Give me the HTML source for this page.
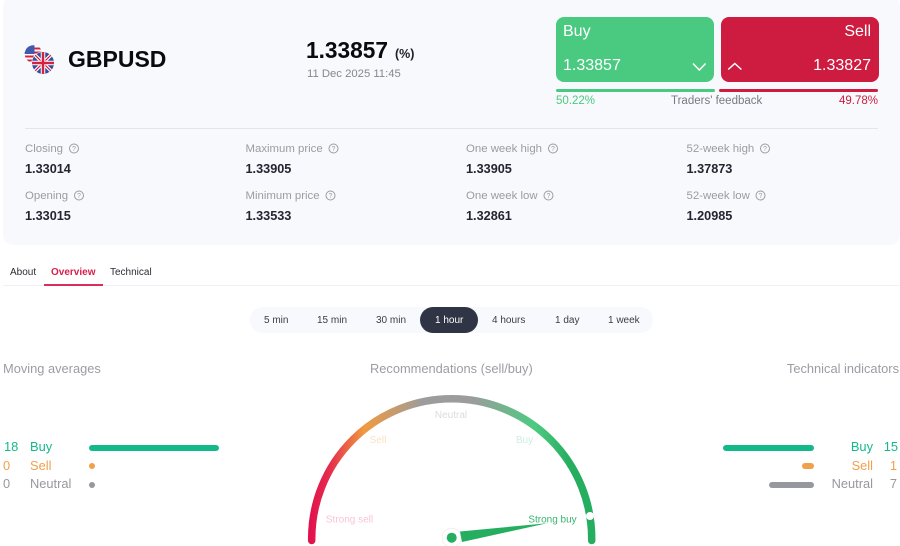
<!DOCTYPE html>
<html lang="en"><head><meta charset="utf-8"><title>GBPUSD</title>
<style>
*{box-sizing:border-box}
html,body{margin:0;padding:0;background:#fff}
body{width:900px;height:546px;overflow:hidden;position:relative;font-family:"Liberation Sans",Arial,sans-serif;color:#222}
.a{position:absolute;white-space:nowrap;line-height:1}
.lab{font-size:11.4px;color:#9a9ca2;top:0}
.val{font-size:12.7px;font-weight:700;color:#222630}
.tf{font-size:10px;color:#3a3d45}
.h{font-size:12.85px;color:#9b9da3}
.r{font-size:12.85px}
</style></head><body>
<div class="a" style="left:3px;top:-4px;width:897px;height:249px;background:#f8f9fc;border-radius:10px"></div>

<svg class="a" style="left:24px;top:45px" width="32" height="30" viewBox="24 45 32 30">
<defs><clipPath id="us"><circle cx="33.500" cy="54" r="8.800"/></clipPath><clipPath id="uk"><circle cx="43" cy="63" r="11"/></clipPath></defs>
<g clip-path="url(#us)"><rect x="24" y="45" width="20" height="18" fill="#fff"/>
<path d="M24 47.500h20v2H24zM24 51.500h20v2H24zM24 55.500h20v2H24zM24 59.500h20v2H24z" fill="#d5213f"/>
<rect x="24" y="45" width="10.500" height="9" fill="#3f5bb0"/></g>
<circle cx="43" cy="63" r="11.500" fill="#f8f9fc"/>
<g clip-path="url(#uk)"><rect x="32" y="52" width="22" height="22" fill="#2f50a0"/>
<path d="M32 52L54 74M54 52L32 74" stroke="#fff" stroke-width="3.500"/>
<path d="M32 52L54 74M54 52L32 74" stroke="#d5213f" stroke-width="1.200"/>
<path d="M43 52V74M32 63H54" stroke="#fff" stroke-width="4.500"/>
<path d="M43 52V74M32 63H54" stroke="#d5213f" stroke-width="2.500"/></g>
</svg>
<div class="a" style="left:68px;top:48px;font-size:23px;font-weight:700;color:#0b0b0f">GBPUSD</div>
<div class="a" style="left:306px;top:39px;font-size:22.700px;font-weight:700;color:#0b0b0f">1.33857</div>
<div class="a" style="left:395px;top:48px;font-size:12.500px;font-weight:700;color:#1c1f28">(%)</div>
<div class="a" style="left:307px;top:69px;font-size:11.300px;color:#85878d">11 Dec 2025 11:45</div>

<div class="a" style="left:556px;top:17px;width:158px;height:65px;background:#4aca80;border-radius:8px"></div>
<div class="a" style="left:721px;top:17px;width:158px;height:65px;background:#cd1c40;border-radius:8px"></div>
<div class="a" style="left:563px;top:24px;font-size:16px;color:#fff">Buy</div>
<div class="a" style="right:29px;top:24px;font-size:16px;color:#fff">Sell</div>
<div class="a" style="left:563px;top:58px;font-size:16px;color:#fff">1.33857</div>
<div class="a" style="right:29px;top:58px;font-size:16px;color:#fff">1.33827</div>
<svg class="a" style="left:692px;top:62px" width="15" height="11"><path d="M1 1.500L7.300 8L13.600 1.500" fill="none" stroke="#fff" stroke-width="1.500"/></svg>
<svg class="a" style="left:727px;top:61px" width="16" height="11"><path d="M1.200 8.500L7.800 2.500L14.400 8.500" fill="none" stroke="#fff" stroke-width="1.500"/></svg>
<div class="a" style="left:556px;top:89px;width:159px;height:3px;background:#4aca80;border-radius:2px"></div>
<div class="a" style="left:719px;top:89px;width:159px;height:3px;background:#cd1c40;border-radius:2px"></div>
<div class="a" style="left:556px;top:96px;font-size:11.500px;color:#4aca80">50.22%</div>
<div class="a" style="left:671px;top:96px;font-size:11.500px;color:#777a82">Traders' feedback</div>
<div class="a" style="right:22px;top:96px;font-size:11.500px;color:#cd1c40">49.78%</div>

<div class="a" style="left:25px;top:128px;width:853px;height:1px;background:#e3e5ec"></div>

<div class="a lab" style="left:25px;top:144px">Closing</div>
<div class="a lab" style="left:245.500px;top:144px">Maximum price</div>
<div class="a lab" style="left:466px;top:144px">One week high</div>
<div class="a lab" style="left:686.500px;top:144px">52-week high</div>
<div class="a val" style="left:25px;top:163px">1.33014</div>
<div class="a val" style="left:245.500px;top:163px">1.33905</div>
<div class="a val" style="left:466px;top:163px">1.33905</div>
<div class="a val" style="left:686.500px;top:163px">1.37873</div>
<div class="a lab" style="left:25px;top:191px">Opening</div>
<div class="a lab" style="left:245.500px;top:191px">Minimum price</div>
<div class="a lab" style="left:466px;top:191px">One week low</div>
<div class="a lab" style="left:686.500px;top:191px">52-week low</div>
<div class="a val" style="left:25px;top:210px">1.33015</div>
<div class="a val" style="left:245.500px;top:210px">1.33533</div>
<div class="a val" style="left:466px;top:210px">1.32861</div>
<div class="a val" style="left:686.500px;top:210px">1.20985</div>

<svg class="a" style="left:0;top:140px" width="900" height="65" fill="none" stroke="#9a9ca2" stroke-width="1">
<g><circle cx="74" cy="8.500" r="4.500"/><circle cx="333.500" cy="8.500" r="4.500"/><circle cx="553" cy="8.500" r="4.500"/><circle cx="765" cy="8.500" r="4.500"/>
<circle cx="79" cy="55.500" r="4.500"/><circle cx="330.500" cy="55.500" r="4.500"/><circle cx="548.500" cy="55.500" r="4.500"/><circle cx="760.500" cy="55.500" r="4.500"/></g>
<g font-family="Liberation Sans,sans-serif" font-size="7" fill="#9a9ca2" stroke="none" text-anchor="middle">
<text x="74" y="11">?</text><text x="333.500" y="11">?</text><text x="553" y="11">?</text><text x="765" y="11">?</text>
<text x="79" y="58">?</text><text x="330.500" y="58">?</text><text x="548.500" y="58">?</text><text x="760.500" y="58">?</text></g>
</svg>

<div class="a" style="left:10px;top:268px;font-size:10px;color:#2a2d35">About</div>
<div class="a" style="left:51px;top:268px;font-size:10px;font-weight:700;color:#d81f4c">Overview</div>
<div class="a" style="left:110px;top:268px;font-size:10px;color:#2a2d35">Technical</div>
<div class="a" style="left:3px;top:285px;width:897px;height:1px;background:#f0f1f6"></div>
<div class="a" style="left:44px;top:284px;width:59px;height:2px;background:#d8305a"></div>

<div class="a" style="left:250px;top:307px;width:403px;height:26px;background:#f8f9fc;border-radius:13px"></div>
<div class="a" style="left:420px;top:307px;width:58px;height:26px;background:#2f3544;border-radius:13px"></div>
<div class="a tf" style="left:264px;top:316px">5 min</div>
<div class="a tf" style="left:317px;top:316px">15 min</div>
<div class="a tf" style="left:376px;top:316px">30 min</div>
<div class="a tf" style="left:435px;top:316px;color:#fff">1 hour</div>
<div class="a tf" style="left:492px;top:316px">4 hours</div>
<div class="a tf" style="left:555px;top:316px">1 day</div>
<div class="a tf" style="left:608px;top:316px">1 week</div>

<div class="a h" style="left:3px;top:363px">Moving averages</div>
<div class="a h" style="left:370px;top:363px">Recommendations (sell/buy)</div>
<div class="a h" style="right:1px;top:363px">Technical indicators</div>

<div class="a r" style="left:4px;top:441px;color:#14b98a">18</div>
<div class="a r" style="left:30px;top:441px;color:#14b98a">Buy</div>
<div class="a r" style="left:3px;top:460px;color:#f0a04a">0</div>
<div class="a r" style="left:30px;top:460px;color:#f0a04a">Sell</div>
<div class="a r" style="left:3px;top:478px;color:#96989e">0</div>
<div class="a r" style="left:30px;top:478px;color:#96989e">Neutral</div>
<div class="a" style="left:89px;top:445px;width:130px;height:6px;background:#14b98a;border-radius:3px"></div>
<div class="a" style="left:89px;top:463px;width:6px;height:6px;background:#f0a04a;border-radius:3px"></div>
<div class="a" style="left:89px;top:482px;width:6px;height:6px;background:#96989e;border-radius:3px"></div>

<div class="a r" style="right:27px;top:441px;color:#14b98a">Buy</div>
<div class="a r" style="right:2px;top:441px;color:#14b98a">15</div>
<div class="a r" style="right:27px;top:460px;color:#f0a04a">Sell</div>
<div class="a r" style="right:3px;top:460px;color:#f0a04a">1</div>
<div class="a r" style="right:27px;top:478px;color:#96989e">Neutral</div>
<div class="a r" style="right:3px;top:478px;color:#96989e">7</div>
<div class="a" style="left:723px;top:445px;width:91px;height:6px;background:#14b98a;border-radius:3px"></div>
<div class="a" style="left:802px;top:463px;width:12px;height:6px;background:#f0a04a;border-radius:3px"></div>
<div class="a" style="left:769px;top:482px;width:45px;height:6px;background:#96989e;border-radius:3px"></div>

<svg class="a" style="left:0;top:0" width="900" height="546">
<defs><linearGradient id="g" gradientUnits="userSpaceOnUse" x1="311" y1="0" x2="592" y2="0">
<stop offset="0" stop-color="#e3124f"/><stop offset=".07" stop-color="#e5304c"/><stop offset=".19" stop-color="#f09a40"/><stop offset=".4" stop-color="#9c9c9c"/><stop offset=".57" stop-color="#9c9c9c"/><stop offset=".8" stop-color="#4cca80"/><stop offset=".92" stop-color="#25ad60"/><stop offset="1" stop-color="#25ad60"/></linearGradient></defs>
<path d="M311.700 540.500V538.700A140 140 0 0 1 591.700 538.700V540.500" fill="none" stroke="url(#g)" stroke-width="7.500" stroke-linecap="round"/>
<circle cx="590" cy="516" r="4" fill="#fff"/>
<circle cx="451.700" cy="537.700" r="9.500" fill="#fff" stroke="#f0f0f0" stroke-width="1"/>
<path d="M460 531.500L547 523.200L462 542Z" fill="#25ad60"/>
<circle cx="451.700" cy="537.700" r="5" fill="#25ad60"/>
<g font-family="Liberation Sans,sans-serif" font-size="10">
<text x="451" y="418" text-anchor="middle" fill="#dcdcdc">Neutral</text>
<text x="378" y="443" text-anchor="middle" fill="#fae0c4">Sell</text>
<text x="524.500" y="443" text-anchor="middle" fill="#cdefe0">Buy</text>
<text x="349.500" y="522.500" text-anchor="middle" fill="#fbc4d6">Strong sell</text>
<text x="552.500" y="522.500" text-anchor="middle" fill="#35b56e">Strong buy</text>
</g>
</svg>
</body></html>
